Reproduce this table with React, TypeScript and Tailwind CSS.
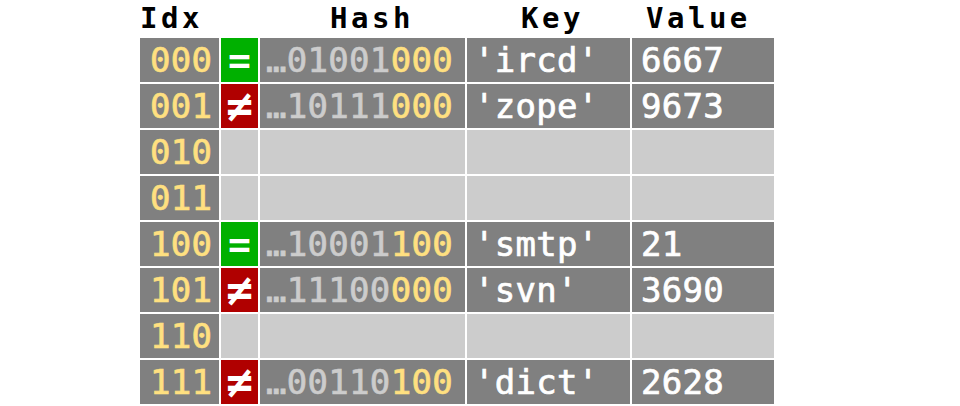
import React from "react";

type Row = {
  idx: string;
  match?: boolean;
  hashHead?: string;
  hashTail?: string;
  key?: string;
  value?: string;
};

const rows: Row[] = [
  { idx: "000", match: true, hashHead: "01001", hashTail: "000", key: "'ircd'", value: "6667" },
  { idx: "001", match: false, hashHead: "10111", hashTail: "000", key: "'zope'", value: "9673" },
  { idx: "010" },
  { idx: "011" },
  { idx: "100", match: true, hashHead: "10001", hashTail: "100", key: "'smtp'", value: "21" },
  { idx: "101", match: false, hashHead: "11100", hashTail: "000", key: "'svn'", value: "3690" },
  { idx: "110" },
  { idx: "111", match: false, hashHead: "00110", hashTail: "100", key: "'dict'", value: "2628" },
];

const mono = "font-['DejaVu_Sans_Mono',monospace]";
const head = `flex items-center text-[29px] tracking-[3.5px] text-black leading-none font-bold ${mono}`;
// regular weight with a thin stroke: the reference sits between regular and bold
const cell = `flex items-center text-[34px] tracking-[0.3px] leading-none [-webkit-text-stroke:0.7px_currentColor] ${mono}`;

export default function App() {
  return (
    <div className="w-[960px] h-[406px] bg-white overflow-hidden pl-[140px]">
      <div className="grid grid-cols-[79px_37px_205px_163px_142px] grid-rows-[36px_repeat(8,44px)] gap-[2px]">
        <div className={head}>Idx</div>
        <div />
        <div className={`${head} pl-[70px]`}>Hash</div>
        <div className={`${head} pl-[54px]`}>Key</div>
        <div className={`${head} pl-[14px]`}>Value</div>

        {rows.map((r) => {
          const filled = r.key !== undefined;
          return (
            <React.Fragment key={r.idx}>
              <div className={`${cell} bg-[#808080] pl-[10px] text-[#ffe080]`}>{r.idx}</div>
              {filled ? (
                <div
                  className={`flex items-center justify-center font-bold leading-none text-white ${mono} ${
                    r.match ? "bg-[#00b000] text-[38px]" : "bg-[#b00000] text-[44px]"
                  }`}
                >
                  {r.match ? "=" : "≠"}
                </div>
              ) : (
                <div className="bg-[#cccccc]" />
              )}
              {filled ? (
                <div className={`${cell} bg-[#808080] pl-[6px]`}>
                  <span className="text-[#cccccc]">…{r.hashHead}</span>
                  <span className="text-[#ffe080]">{r.hashTail}</span>
                </div>
              ) : (
                <div className="bg-[#cccccc]" />
              )}
              {filled ? (
                <div className={`${cell} bg-[#808080] pl-[7px] text-white`}>{r.key}</div>
              ) : (
                <div className="bg-[#cccccc]" />
              )}
              {filled ? (
                <div className={`${cell} bg-[#808080] pl-[9px] text-white`}>{r.value}</div>
              ) : (
                <div className="bg-[#cccccc]" />
              )}
            </React.Fragment>
          );
        })}
      </div>
    </div>
  );
}
